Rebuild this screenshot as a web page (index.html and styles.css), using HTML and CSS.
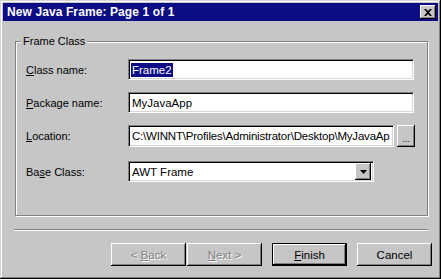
FILE: index.html
```html
<!DOCTYPE html>
<html lang="en">
<head>
  <meta charset="UTF-8" />
  <title>New Java Frame</title>
  <link rel="stylesheet" href="styles.css">
</head>
<body>
  <div class="window">
    <div class="titlebar">
      <span class="title">New Java Frame: Page 1 of 1</span>
      <button class="close" type="button" aria-label="Close">
        <svg width="8" height="7" viewBox="0 0 8 7">
          <path d="M0 0h2l2 2 2-2h2L5 3.5 8 7H6L4 5 2 7H0l3-3.5z" fill="#000"/>
        </svg>
      </button>
    </div>
    <div class="content">
      <fieldset class="group">
        <legend>Frame Class</legend>
        <div class="row">
          <label class="lbl"><u>C</u>lass name:</label>
          <div class="field wide"><span class="selected">Frame2</span></div>
        </div>
        <div class="row">
          <label class="lbl"><u>P</u>ackage name:</label>
          <div class="field wide">MyJavaApp</div>
        </div>
        <div class="row tall">
          <label class="lbl"><u>L</u>ocation:</label>
          <div class="field path">C:\WINNT\Profiles\Administrator\Desktop\MyJavaAp</div>
          <button class="btn browse" type="button">...</button>
        </div>
        <div class="row base">
          <label class="lbl">Ba<u>s</u>e Class:</label>
          <div class="field combo">
            <span class="combo-text">AWT Frame</span>
            <span class="drop">
              <svg width="7" height="4" viewBox="0 0 7 4"><path d="M0 0h7L3.5 4z" fill="#000"/></svg>
            </span>
          </div>
        </div>
      </fieldset>
      <div class="sep"></div>
      <div class="buttons">
        <div class="pair">
          <button class="btn wiz off" type="button">&lt; <u>B</u>ack</button>
          <button class="btn wiz off" type="button"><u>N</u>ext &gt;</button>
        </div>
        <button class="btn wiz default" type="button"><u>F</u>inish</button>
        <button class="btn wiz" type="button">Cancel</button>
      </div>
    </div>
  </div>
</body>
</html>
```

FILE: styles.css
```css
* {
  box-sizing: border-box;
}
body {
  margin: 0;
  font-family: 'Liberation Sans', Arial, sans-serif;
  font-size: 11px;
  color: #000;
  background: #c6c6c6;
}
.window {
  width: 441px;
  height: 279px;
  padding: 3px;
  background: #c6c6c6;
  box-shadow: inset -1px -1px 0 #000, inset 1px 1px 0 #d6d6d6,
              inset -2px -2px 0 #808080, inset 2px 2px 0 #fff;
}
.titlebar {
  height: 18px;
  background: #0c0c84;
  display: flex;
  align-items: center;
  justify-content: space-between;
  padding: 0 2px 0 4px;
}
.title {
  color: #fff;
  font-weight: 700;
  font-size: 12px;
  letter-spacing: 0.1px;
}
.close {
  width: 16px;
  height: 14px;
  padding: 0;
  border: none;
  background: #c6c6c6;
  display: flex;
  align-items: center;
  justify-content: center;
  box-shadow: inset -1px -1px 0 #000, inset 1px 1px 0 #fff,
              inset -2px -2px 0 #808080;
}
.content {
  padding: 14px 0 0 12px;
}
.group {
  width: 413px;
  margin: 0;
  padding: 11px 0 33px 10px;
  border: 1px solid #808080;
  box-shadow: inset 1px 1px 0 #fff, 1px 1px 0 #fff;
}
.group legend {
  padding: 0 2px;
  margin-left: -5px;
  line-height: 13px;
  background: #c6c6c6;
}
.row {
  display: flex;
  align-items: center;
  height: 21px;
  margin-bottom: 12px;
}
.row.tall {
  height: 22px;
  margin-bottom: 14px;
}
.row.base {
  margin-bottom: 0;
}
.lbl {
  width: 102px;
  flex: none;
}
.field {
  flex: none;
  height: 100%;
  background: #fff;
  border-top: 1px solid #808080;
  border-left: 1px solid #808080;
  border-bottom: 1px solid #fff;
  border-right: 1px solid #fff;
  box-shadow: inset 1px 1px 0 #000, inset -1px -1px 0 #d6d6d6;
  padding: 0 2px 0 3px;
  display: flex;
  align-items: center;
  white-space: nowrap;
  overflow: hidden;
  font-size: 11.5px;
}
.field.wide {
  width: 286px;
}
.field.path {
  width: 266px;
  letter-spacing: -0.2px;
}
.field.combo {
  width: 246px;
  padding-right: 2px;
  justify-content: space-between;
}
.selected {
  background: #0c0c84;
  color: #fff;
  padding: 1px 1px;
  margin-left: -1px;
}
.drop {
  width: 16px;
  height: 17px;
  background: #c6c6c6;
  display: flex;
  align-items: center;
  justify-content: center;
  box-shadow: inset -1px -1px 0 #000, inset 1px 1px 0 #fff,
              inset -2px -2px 0 #808080;
}
.btn {
  font-family: inherit;
  font-size: 11.5px;
  color: #000;
  background: #c6c6c6;
  border: none;
  padding: 0;
  box-shadow: inset -1px -1px 0 #000, inset 1px 1px 0 #fff,
              inset -2px -2px 0 #808080;
}
.browse {
  flex: none;
  width: 18px;
  height: 22px;
  margin-left: 3px;
  font-size: 9px;
  line-height: 9px;
  padding-top: 6px;
}
.sep {
  width: 414px;
  margin: 13px 0 0 -1px;
  height: 2px;
  border-top: 1px solid #808080;
  border-bottom: 1px solid #fff;
}
.buttons {
  display: flex;
  gap: 10px;
  margin: 12px 0 0 96px;
}
.pair {
  display: flex;
  gap: 1px;
}
.wiz {
  width: 75px;
  height: 23px;
}
.wiz.off {
  color: #808080;
  text-shadow: 1px 1px 0 #fff;
}
.wiz.default {
  box-shadow: inset 0 0 0 1px #000, inset -2px -2px 0 #000,
              inset 2px 2px 0 #fff, inset -3px -3px 0 #808080;
}
```
